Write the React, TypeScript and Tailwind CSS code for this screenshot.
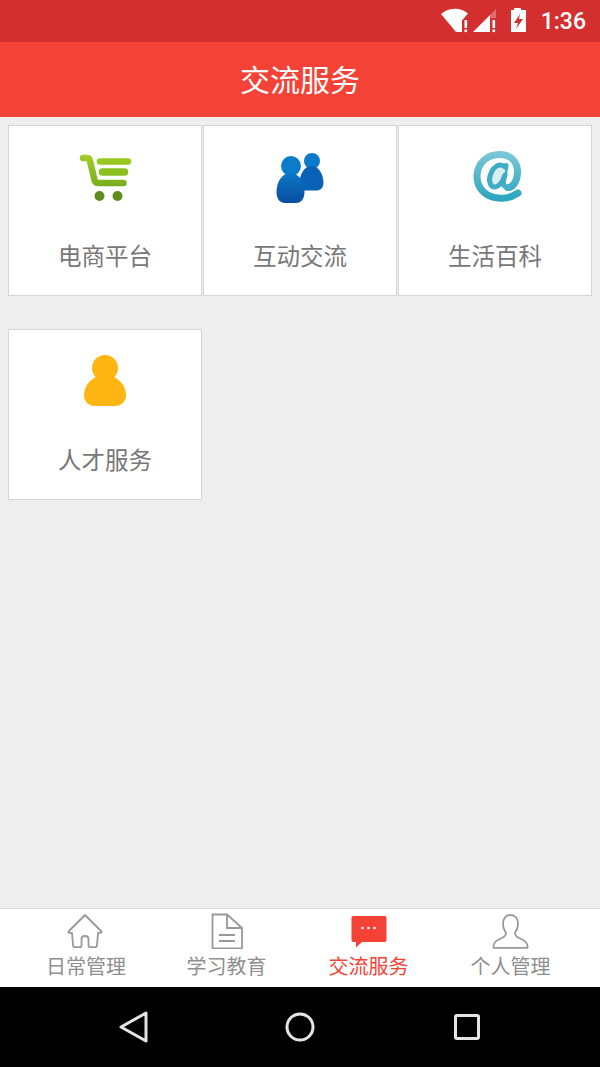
import React from "react";

const Cart = () => (
  <svg width="60" height="60" viewBox="0 0 60 60" className="blur-[0.5px]">
    <defs>
      <linearGradient id="cg" x1="0" y1="0" x2="0" y2="60" gradientUnits="userSpaceOnUse">
        <stop offset="0" stopColor="#a8d326" />
        <stop offset="0.7" stopColor="#74a81e" />
      </linearGradient>
    </defs>
    <path d="M8 9H11.5C13.5 9 14.5 10 15 12L19.5 31C20 33 21.5 34 24 34H48.5" fill="none" stroke="url(#cg)" strokeWidth="6.5" strokeLinecap="round" strokeLinejoin="round" />
    <path d="M25 12.5H53" stroke="#97c91f" strokeWidth="6.5" strokeLinecap="round" />
    <path d="M27.5 23H49.5" stroke="#8cc020" strokeWidth="7.5" strokeLinecap="round" />
    <circle cx="24.5" cy="47" r="5" fill="#5f8c1e" />
    <circle cx="42.5" cy="47" r="5" fill="#5f8c1e" />
  </svg>
);

const Users = () => (
  <svg width="60" height="60" viewBox="0 0 60 60" className="blur-[0.5px]">
    <defs>
      <linearGradient id="ug" x1="0" y1="14" x2="0" y2="56" gradientUnits="userSpaceOnUse">
        <stop offset="0" stopColor="#0a84d2" />
        <stop offset="1" stopColor="#0a4a9c" />
      </linearGradient>
    </defs>
    <circle cx="42" cy="12" r="8" fill="#0a7ccb" />
    <path d="M41.5 17C49 17 53.5 26 53.5 34C53.5 39 50 41.5 46.5 41.5H36C32 41.5 29.5 39 29.5 34C29.5 26 34 17 41.5 17Z" fill="#0962b6" />
    <circle cx="21" cy="17" r="10" fill="#0a7ccb" />
    <path d="M20.5 24C29 24 34.5 33 34.5 43C34.5 50 31 54 26 54H15C10 54 6.5 50 6.5 43C6.5 33 12 24 20.5 24Z" fill="url(#ug)" />
  </svg>
);

const At = () => (
  <svg width="60" height="60" viewBox="0 0 60 60" className="blur-[0.6px]">
    <defs>
      <linearGradient id="ag" x1="0" y1="0" x2="0" y2="1">
        <stop offset="0" stopColor="#78c6d6" />
        <stop offset="1" stopColor="#2fa6c0" />
      </linearGradient>
    </defs>
    <path d="M53 44C47 48 41 50 33.5 49C20 48 11.5 38.5 12 26C13 13 23 5.5 34.5 5.5C46 5.5 53 13 52.5 24C52 33 47.5 38.5 43 38.5" fill="none" stroke="url(#ag)" strokeWidth="7" strokeLinecap="round" strokeLinejoin="round" />
    <path d="M41 16.5L38.5 33C38 36.5 40 38.5 43 38.5" fill="none" stroke="#45b0c6" strokeWidth="5" strokeLinecap="round" />
    <path d="M40 18C35 13.5 28.5 17 25.5 25.5C23 33 26 38.5 30 38C34.5 37.5 38 31.5 40 26" fill="#d9edf2" stroke="#3eacc4" strokeWidth="5" strokeLinecap="round" />
  </svg>
);

const Person = () => (
  <svg width="60" height="60" viewBox="0 0 60 60" className="blur-[0.3px]">
    <circle cx="30" cy="15" r="13" fill="#ffb612" />
    <path d="M30 22C42 22 51 32 51 42C51 49 46 53 40 53H20C14 53 9 49 9 42C9 32 18 22 30 22Z" fill="#ffb612" />
  </svg>
);

const NavHome = () => (
  <svg width="40" height="36" viewBox="0 0 40 36" fill="none" stroke="#999999" strokeWidth="1.8" strokeLinejoin="round">
    <path d="M19 2L2.5 18.5C2 19.5 3 20 6 20L7 32C7 33.5 8 34.2 9 34.2H14C15 34.2 15.5 33.5 15.5 32V26C15.5 22 22.5 22 22.5 26V32C22.5 33.5 23 34.2 24 34.2H29C30 34.2 31 33.5 31 32L32 20C35 20 36 19.5 35.5 18.5Z" />
  </svg>
);

const NavDoc = () => (
  <svg width="40" height="36" viewBox="0 0 40 36" fill="none" stroke="#999999" strokeWidth="1.8">
    <path d="M5.5 1.5H20L35 15V35.5H5.5Z" />
    <path d="M20 1.5V15H35" />
    <path d="M12 22H28M12 28H28" />
  </svg>
);

const NavChat = () => (
  <svg width="40" height="36" viewBox="0 0 40 36">
    <path d="M4.5 3H35.5C36.8 3 37.5 3.7 37.5 5V27C37.5 28.3 36.8 29 35.5 29H13L7 34.5V29H4.5C3.2 29 2.5 28.3 2.5 27V5C2.5 3.7 3.2 3 4.5 3Z" fill="#f44336" />
    <circle cx="13.5" cy="15" r="1.3" fill="#ffffff" />
    <circle cx="19.5" cy="15" r="1.3" fill="#ffffff" />
    <circle cx="25.5" cy="15" r="1.3" fill="#ffffff" />
  </svg>
);

const NavUser = () => (
  <svg width="40" height="36" viewBox="0 0 40 36" fill="none" stroke="#999999" strokeWidth="1.8" strokeLinejoin="round">
    <path d="M12 11C12 5.5 15 2 19.5 2C24 2 27 5.5 27 11C27 15 25.5 18 24 20C24 23 26 24 30 26C34 27.5 37 30 36.5 34.8H2.5C2 30 5 27.5 9 26C13 24 15 23 15 20C13.5 18 12 15 12 11Z" />
  </svg>
);

const StatusIcons = () => (
  <svg width="95" height="34" viewBox="0 0 95 34" fill="#ffffff">
    <path d="M3 10C11 3 23 3 30 9.5L24 16.5V28L18 28Z" />
    <rect x="26.5" y="16" width="2.6" height="8" />
    <rect x="26.5" y="25.5" width="2.6" height="2.6" />
    <path d="M35 28L52 11V28Z" />
    <path d="M52 11L58 5V14H52Z" opacity="0.3" />
    <rect x="54.5" y="16" width="2.6" height="8" />
    <rect x="54.5" y="25.5" width="2.6" height="2.6" />
    <path fillRule="evenodd" d="M76 4H83V6H88V28H73V6H76ZM82 10L76 19H80L78 25L85 15H81Z" />
  </svg>
);

const cards = [
  { label: "电商平台", icon: <Cart /> },
  { label: "互动交流", icon: <Users /> },
  { label: "生活百科", icon: <At /> },
  { label: "人才服务", icon: <Person /> },
];

const tabs = [
  { label: "日常管理", icon: <NavHome />, width: "w-[140px]", color: "text-[#8f8f8f]" },
  { label: "学习教育", icon: <NavDoc />, width: "w-[141px]", color: "text-[#8f8f8f]" },
  { label: "交流服务", icon: <NavChat />, width: "w-[143px]", color: "text-[#f44336]" },
  { label: "个人管理", icon: <NavUser />, width: "w-[141px]", color: "text-[#8f8f8f]" },
];

export default function App() {
  return (
    <div className="flex h-[1067px] w-[600px] flex-col overflow-hidden bg-[#eeeeee] font-['Noto_Sans_CJK_SC','Noto_Sans',sans-serif]">
      <div className="flex h-[42px] items-center justify-end bg-[#d32f2f] pr-[14px] text-white">
        <StatusIcons />
        <span className="ml-[8px] font-['Roboto',sans-serif] text-[23px] leading-none font-medium">1:36</span>
      </div>
      <div className="flex h-[75px] items-center justify-center bg-[#f44336] pb-[4px] text-[30px] leading-none text-white">
        交流服务
      </div>
      <div className="grid flex-1 grid-cols-[194px_194px_194px] content-start gap-x-px gap-y-[33px] px-2 pt-2">
        {cards.map((c) => (
          <div key={c.label} className="flex h-[171px] flex-col items-center border border-[#d4d4d4] bg-white pt-[23px]">
            {c.icon}
            <span className="mt-[30px] text-[23.5px] leading-[33px] text-[#777777]">{c.label}</span>
          </div>
        ))}
      </div>
      <div className="flex h-[79px] border-t border-[#d8d8d8] bg-white pl-4">
        {tabs.map((t) => (
          <div key={t.label} className={`flex flex-col items-center pt-[4px] ${t.width}`}>
            {t.icon}
            <span className={`pt-[3px] text-[20px] leading-[28px] ${t.color}`}>{t.label}</span>
          </div>
        ))}
      </div>
      <div className="flex h-[80px] items-center justify-between bg-black px-[117px]">
        <svg width="32" height="32" viewBox="0 0 32 32" fill="none" stroke="#e4e4e4" strokeWidth="3" strokeLinejoin="round">
          <path d="M4 16L29 2V30Z" />
        </svg>
        <svg width="32" height="32" viewBox="0 0 32 32" fill="none" stroke="#e4e4e4" strokeWidth="3">
          <circle cx="16" cy="16" r="13" />
        </svg>
        <svg width="32" height="32" viewBox="0 0 32 32" fill="none" stroke="#e4e4e4" strokeWidth="3" strokeLinejoin="round">
          <rect x="4.5" y="4.5" width="23" height="23" rx="1.5" />
        </svg>
      </div>
    </div>
  );
}
